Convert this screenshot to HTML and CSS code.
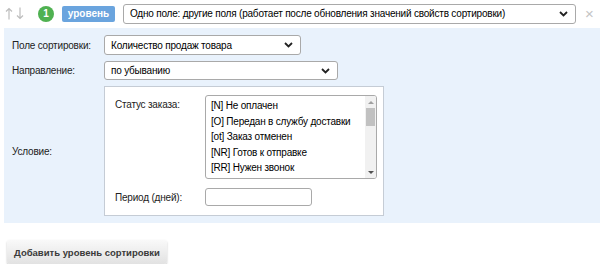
FILE: index.html
```html
<!DOCTYPE html>
<html lang="ru">
<head>
  <meta charset="UTF-8">
  <title>Уровни сортировки</title>
  <link rel="stylesheet" href="styles.css">
</head>
<body>

  <div class="level-head">
    <svg class="move" width="8" height="13" viewBox="0 0 8 13"><path d="M4 12.5V1.5M1 4.5L4 1.5L7 4.5" fill="none" stroke="#bdbdbd" stroke-width="1.2"/></svg>
    <svg class="move" width="8" height="13" viewBox="0 0 8 13"><path d="M4 0.5V11.5M1 8.5L4 11.5L7 8.5" fill="none" stroke="#bdbdbd" stroke-width="1.2"/></svg>
    <span class="level-num">1</span>
    <span class="level-badge">уровень</span>
    <div class="fake-select top-select">
      <span>Одно поле: другие поля (работает после обновления значений свойств сортировки)</span>
      <svg class="chev" width="9" height="6" viewBox="0 0 9 6"><path d="M1 1l3.5 3.5L8 1" fill="none" stroke="#222" stroke-width="1.8"/></svg>
    </div>
    <span class="remove">&times;</span>
  </div>

  <div class="panel">
    <div class="row">
      <div class="label">Поле сортировки:</div>
      <div class="fake-select field-select">
        <span>Количество продаж товара</span>
        <svg class="chev" width="9" height="6" viewBox="0 0 9 6"><path d="M1 1l3.5 3.5L8 1" fill="none" stroke="#222" stroke-width="1.8"/></svg>
      </div>
    </div>
    <div class="row">
      <div class="label">Направление:</div>
      <div class="fake-select dir-select">
        <span>по убыванию</span>
        <svg class="chev" width="9" height="6" viewBox="0 0 9 6"><path d="M1 1l3.5 3.5L8 1" fill="none" stroke="#222" stroke-width="1.8"/></svg>
      </div>
    </div>
    <div class="row cond-row">
      <div class="label">Условие:</div>
      <div class="cond-box">
        <div class="cond-line">
          <div class="cond-label">Статус заказа:</div>
          <div class="listbox">
            <div class="items">
              <div>[N] Не оплачен</div>
              <div>[O] Передан в службу доставки</div>
              <div>[ot] Заказ отменен</div>
              <div>[NR] Готов к отправке</div>
              <div>[RR] Нужен звонок</div>
            </div>
            <div class="scroll">
              <span class="arr up"></span>
              <span class="thumb"></span>
              <span class="arr down"></span>
            </div>
          </div>
        </div>
        <div class="cond-line period">
          <div class="cond-label">Период (дней):</div>
          <div class="text-input"></div>
        </div>
      </div>
    </div>
  </div>

  <button class="add-btn">Добавить уровень сортировки</button>

</body>
</html>
```

FILE: styles.css
```css
body {
  margin: 0;
  font-family: "Liberation Sans", Arial, sans-serif;
  font-size: 10px;
  letter-spacing: -0.2px;
  color: #000;
  background: #fff;
}
.level-head {
  display: flex;
  align-items: center;
  height: 27px;
  padding-left: 5px;
}
.move {
  margin-right: 3px;
}
.level-num {
  width: 16px;
  height: 16px;
  margin-left: 11px;
  border-radius: 50%;
  background: #4fb151;
  color: #fff;
  font-weight: bold;
  font-size: 10px;
  line-height: 16px;
  text-align: center;
  letter-spacing: 0;
}
.level-badge {
  margin-left: 8px;
  width: 53px;
  height: 16px;
  line-height: 16px;
  background: #6aa4de;
  color: #fff;
  font-weight: bold;
  font-size: 10px;
  text-align: center;
  border-radius: 2px;
  letter-spacing: 0;
}
.fake-select {
  display: flex;
  align-items: center;
  justify-content: space-between;
  box-sizing: border-box;
  height: 20px;
  padding: 0 7px 0 6px;
  background: #fff;
  border: 1px solid #a9a9a9;
  border-radius: 3px;
  white-space: nowrap;
  overflow: hidden;
}
.top-select {
  margin-left: 8px;
  width: 453px;
}
.remove {
  margin-left: 9px;
  color: #c4c4c4;
  font-size: 15px;
}
.panel {
  margin: 1px 0 0 4px;
  padding: 7px 0 7px 8px;
  background: #e9f2fc;
}
.row {
  display: flex;
  align-items: center;
  margin-bottom: 6px;
}
.label {
  width: 92px;
  color: #222;
  white-space: nowrap;
}
.field-select {
  width: 197px;
}
.dir-select {
  width: 234px;
  height: 19px;
}
.cond-row {
  margin-bottom: 0;
}
.cond-box {
  width: 280px;
  box-sizing: border-box;
  background: #fff;
  border: 1px solid #c5ccd5;
  padding: 8px 6px 9px 10px;
}
.cond-line {
  display: flex;
  align-items: flex-start;
}
.cond-label {
  width: 90px;
  padding-top: 4px;
  color: #222;
  white-space: nowrap;
}
.listbox {
  display: flex;
  width: 172px;
  height: 84px;
  box-sizing: border-box;
  border: 1px solid #a9a9a9;
  border-radius: 3px;
  overflow: hidden;
}
.items {
  flex: 1;
  min-width: 0;
  overflow: hidden;
  padding: 2px 0 0 5px;
  line-height: 15.5px;
  white-space: nowrap;
}
.scroll {
  display: flex;
  flex-direction: column;
  align-items: center;
  width: 11px;
  background: #f1f1f1;
}
.thumb {
  width: 9px;
  height: 18px;
  margin: 4px 0 auto;
  background: #c1c1c1;
}
.arr {
  width: 0;
  height: 0;
  border-left: 3px solid transparent;
  border-right: 3px solid transparent;
  margin-top: 5px;
}
.up {
  border-bottom: 3px solid #a0a0a0;
}
.down {
  border-top: 3px solid #505050;
  margin: 0 0 4px;
}
.period {
  align-items: center;
  margin-top: 9px;
}
.period .cond-label {
  padding-top: 0;
}
.text-input {
  width: 107px;
  height: 18px;
  box-sizing: border-box;
  border: 1px solid #a9a9a9;
  border-radius: 3px;
}
.add-btn {
  display: block;
  margin: 17px 0 0 7px;
  width: 160px;
  height: 24px;
  padding: 0;
  font-family: "Liberation Sans", Arial, sans-serif;
  font-size: 9.5px;
  font-weight: bold;
  color: #3a3a3a;
  border: none;
  border-radius: 3px;
  background: linear-gradient(#f9f9f9, #e2e2e2);
  box-shadow: 0 1px 2px rgba(0, 0, 0, 0.25);
}
```
